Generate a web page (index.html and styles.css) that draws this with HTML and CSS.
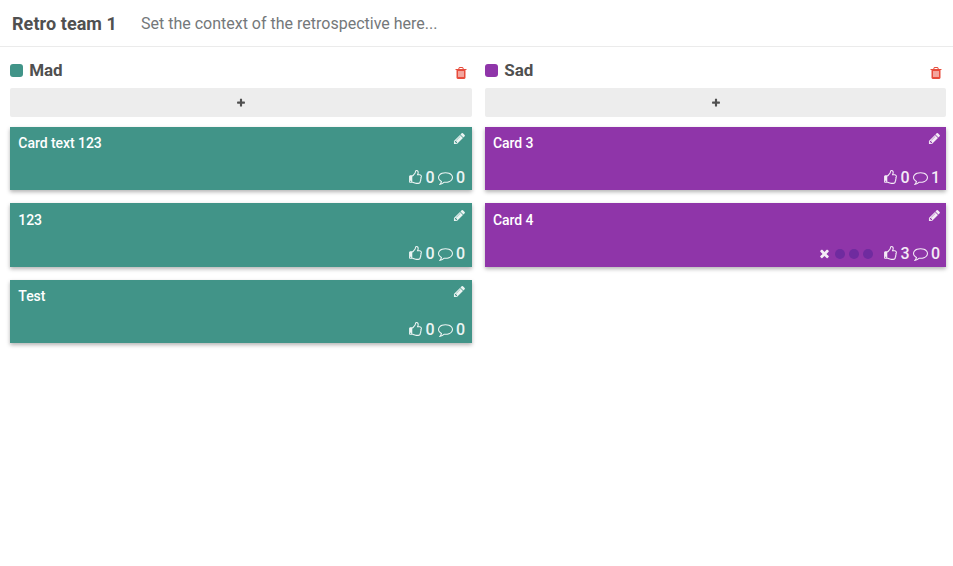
FILE: index.html
```html
<!DOCTYPE html>
<html lang="en">
<head>
<meta charset="utf-8">
<title>Retro team 1</title>
<link rel="stylesheet" href="styles.css">
</head>
<body>
<svg class="sprite" aria-hidden="true">
  <symbol id="trash" viewBox="0 0 1792 1792"><path d="M704 1376v-704q0-14-9-23t-23-9h-64q-14 0-23 9t-9 23v704q0 14 9 23t23 9h64q14 0 23-9t9-23zm256 0v-704q0-14-9-23t-23-9h-64q-14 0-23 9t-9 23v704q0 14 9 23t23 9h64q14 0 23-9t9-23zm256 0v-704q0-14-9-23t-23-9h-64q-14 0-23 9t-9 23v704q0 14 9 23t23 9h64q14 0 23-9t9-23zm-544-992h448l-48-117q-7-9-17-11h-317q-10 2-17 11zm928 32v64q0 14-9 23t-23 9h-96v948q0 83-47 143.500t-113 60.500h-832q-66 0-113-58.500t-47-141.500v-952h-96q-14 0-23-9t-9-23v-64q0-14 9-23t23-9h309l70-167q15-37 54-63t79-26h320q40 0 79 26t54 63l70 167h309q14 0 23 9t9 23z"/></symbol>
  <symbol id="plus" viewBox="0 0 1792 1792"><path d="M1600 736v192q0 40-28 68t-68 28h-416v416q0 40-28 68t-68 28h-192q-40 0-68-28t-28-68v-416h-416q-40 0-68-28t-28-68v-192q0-40 28-68t68-28h416v-416q0-40 28-68t68-28h192q40 0 68 28t28 68v416h416q40 0 68 28t28 68z"/></symbol>
  <symbol id="pencil" viewBox="0 0 1792 1792"><path d="M491 1536l91-91-235-235-91 91v107h128v128h107zm523-928q0-22-22-22-10 0-17 7l-542 542q-7 7-7 17 0 22 22 22 10 0 17-7l542-542q7-7 7-17zm-54-192l416 416-832 832h-416v-416zm683 96q0 53-37 90l-166 166-416-416 166-165q36-38 90-38 53 0 91 38l235 234q37 39 37 91z"/></symbol>
  <symbol id="thumb" viewBox="0 0 1536 1792"><path d="M256 1344q0-26-19-45t-45-19-45 19-19 45 19 45 45 19 45-19 19-45zm1152-576q0-51-39-89.500t-89-38.500h-352q0-58 48-159.500t48-160.500q0-98-32-145t-128-47q-26 26-38 85t-30.500 125.500-59.500 109.500q-22 23-77 91-4 5-23 30t-31.500 41-34.500 42.500-40 44-38.500 35.500-40 27-35.500 9h-32v640h32q13 0 31.500 3t33 6.500 38 11 35 11.500 35.500 12.500 29 10.500q211 73 342 73h121q192 0 192-167 0-26-5-56 30-16 47.500-52.500t17.500-73.500-18-69q53-50 53-119 0-25-10-55.500t-25-47.500q32-1 53.500-47t21.500-81zm128-1q0 89-49 163 9 33 9 69 0 77-38 144 3 21 3 43 0 101-60 178 1 139-85 219.500t-227 80.500h-129q-96 0-189.500-22.500t-216.500-65.500q-116-40-138-40h-288q-53 0-90.500-37.500t-37.500-90.500v-640q0-53 37.500-90.500t90.500-37.500h274q36-24 137-155 58-75 107-128 24-25 35.500-85.500t30.500-126.500 62-108q39-37 90-37 84 0 151 32.500t102 101.500 35 186q0 93-48 192h176q104 0 180 76t76 179z"/></symbol>
  <symbol id="comment" viewBox="0 0 1792 1792"><path d="M896 384q-204 0-381.500 69.500t-282 187.500-104.500 255q0 112 71.500 213.500t201.500 175.500l87 50-27 96q-24 91-70 172 152-63 275-171l43-38 57 6q69 8 130 8 204 0 381.500-69.500t282-187.500 104.500-255-104.500-255-282-187.500-381.500-69.500zm896 512q0 174-120 321.500t-326 233-450 85.500q-70 0-145-8-198 175-460 242-49 14-114 22h-5q-15 0-27-10.500t-16-27.500v-1q-3-4-.5-12t2-10 4.500-9.500l6-9 7-8.500 8-9q7-8 31-34.500t34.500-38 31-39.500 32.500-51 27-59 26-76q-157-89-247.500-220t-90.500-281q0-174 120-321.500t326-233 450-85.500 450 85.500 326 233 120 321.500z"/></symbol>
  <symbol id="times" viewBox="0 0 1792 1792"><path d="M1490 1322q0 40-28 68l-136 136q-28 28-68 28t-68-28l-294-294-294 294q-28 28-68 28t-68-28l-136-136q-28-28-28-68t28-68l294-294-294-294q-28-28-28-68t28-68l136-136q28-28 68-28t68 28l294 294 294-294q28-28 68-28t68 28l136 136q28 28 28 68t-28 68l-294 294 294 294q28 28 28 68z"/></symbol>
</svg>
<header class="topbar">
  <h1 class="title">Retro team 1</h1>
  <p class="context">Set the context of the retrospective here...</p>
</header>
<main class="board">
  <section class="column mad">
    <div class="column-head">
      <span class="swatch"></span><h2 class="name">Mad</h2>
      <svg class="trash"><use href="#trash"/></svg>
    </div>
    <div class="add"><svg class="plus"><use href="#plus"/></svg></div>
    <article class="card">
      <div class="row"><span class="text">Card text 123</span><svg class="pencil"><use href="#pencil"/></svg></div>
      <div class="stats"><svg class="thumb"><use href="#thumb"/></svg><span class="count">0</span><svg class="comment"><use href="#comment"/></svg><span class="count">0</span></div>
    </article>
    <article class="card">
      <div class="row"><span class="text">123</span><svg class="pencil"><use href="#pencil"/></svg></div>
      <div class="stats"><svg class="thumb"><use href="#thumb"/></svg><span class="count">0</span><svg class="comment"><use href="#comment"/></svg><span class="count">0</span></div>
    </article>
    <article class="card">
      <div class="row"><span class="text">Test</span><svg class="pencil"><use href="#pencil"/></svg></div>
      <div class="stats"><svg class="thumb"><use href="#thumb"/></svg><span class="count">0</span><svg class="comment"><use href="#comment"/></svg><span class="count">0</span></div>
    </article>
  </section>
  <section class="column sad">
    <div class="column-head">
      <span class="swatch"></span><h2 class="name">Sad</h2>
      <svg class="trash"><use href="#trash"/></svg>
    </div>
    <div class="add"><svg class="plus"><use href="#plus"/></svg></div>
    <article class="card">
      <div class="row"><span class="text">Card 3</span><svg class="pencil"><use href="#pencil"/></svg></div>
      <div class="stats"><svg class="thumb"><use href="#thumb"/></svg><span class="count">0</span><svg class="comment"><use href="#comment"/></svg><span class="count">1</span></div>
    </article>
    <article class="card">
      <div class="row"><span class="text">Card 4</span><svg class="pencil"><use href="#pencil"/></svg></div>
      <div class="stats"><svg class="times"><use href="#times"/></svg><span class="votes"><i class="vote"></i><i class="vote"></i><i class="vote"></i></span><svg class="thumb"><use href="#thumb"/></svg><span class="count">3</span><svg class="comment"><use href="#comment"/></svg><span class="count">0</span></div>
    </article>
  </section>
</main>
</body>
</html>
```
FILE: styles.css
```css
* { box-sizing: border-box; }
body {
  margin: 0;
  background: #fff;
  color: #505050;
  font-family: Roboto, "Liberation Sans", sans-serif;
}
svg { display: block; fill: currentColor; flex: none; }
.sprite { display: none; }
h1, h2, p { margin: 0; }

.topbar {
  display: flex;
  align-items: center;
  gap: 24px;
  height: 47px;
  padding: 2px 0 0 12px;
  border-bottom: 1px solid #ebebeb;
}
.title { font-size: 18px; line-height: 24px; font-weight: 700; letter-spacing: .07px; }
.context { font-size: 16px; line-height: 24px; color: #74787a; }

.board {
  display: grid;
  grid-template-columns: 462px 461px;
  gap: 13px;
  padding: 11px 0 0 10px;
}
.mad { --tone: #419488; }
.sad { --tone: #8f35a9; }

.column-head { display: flex; align-items: center; height: 24px; }
.swatch { width: 13px; height: 13px; border-radius: 3px; background: var(--tone); }
.name { flex: 1; margin-left: 6.3px; font-size: 17px; line-height: 24px; font-weight: 700; letter-spacing: -.1px; }
.trash { width: 14px; height: 14px; margin: 6px 4px 0 0; color: #e74c3c; }
.sad .trash { margin-right: 3px; }

.add {
  display: flex;
  align-items: center;
  justify-content: center;
  height: 29px;
  margin: 6px 0 10px;
  border-radius: 2px;
  background: #ededed;
}
.plus { width: 10px; height: 10px; }

.card {
  display: flex;
  flex-direction: column;
  justify-content: space-between;
  height: 63.4px;
  margin-bottom: 13px;
  padding: 6.2px 7px 3.8px 8.3px;
  background: var(--tone);
  color: #fff;
  box-shadow: 0 2px 4px rgba(0, 0, 0, .3);
}
.sad .card { padding-right: 6px; padding-left: 8px; }
.row { display: flex; justify-content: space-between; }
.text { font-size: 14px; line-height: 20px; font-weight: 500; letter-spacing: -.05px; }
.pencil { width: 13px; height: 13px; margin: -1px -1px 0 0; opacity: .9; }
.stats { display: flex; align-items: center; justify-content: flex-end; height: 18px; opacity: .9; }
.count { width: 9px; font-size: 16px; line-height: 18px; font-weight: 500; }
.thumb { width: 13px; height: 15px; margin: -1px 3.5px 0 0; }
.comment { width: 15px; height: 15px; margin: -1px 3.5px 0 3px; }
.times { width: 13px; height: 13px; margin-top: -1px; }
.votes { display: flex; gap: 4px; margin: 0 11px 0 4px; }
.vote { width: 10px; height: 10px; border-radius: 50%; background: #6c2b9f; }
```
